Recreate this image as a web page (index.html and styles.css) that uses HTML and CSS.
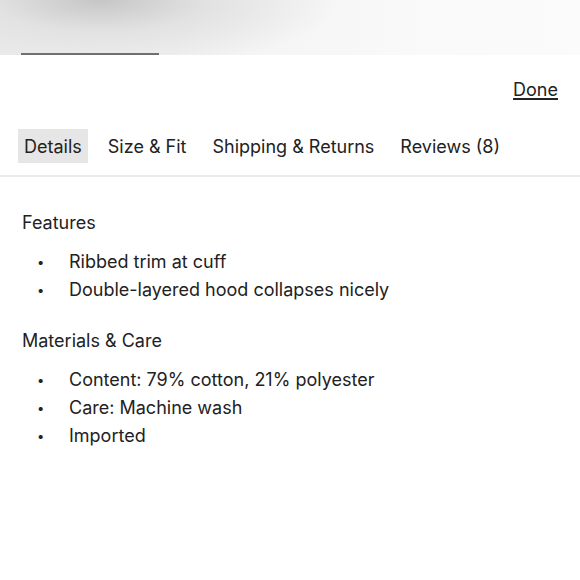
FILE: index.html
```html
<!DOCTYPE html>
<html lang="en">
<head>
  <meta charset="UTF-8" />
  <meta name="viewport" content="width=device-width, initial-scale=1.0" />
  <title>Product Details</title>
  <link rel="stylesheet" href="styles.css">
</head>
<body>
  <div class="backdrop">
    <div class="backdrop-line"></div>
  </div>

  <div class="sheet">
    <div class="sheet-head">
      <a href="#" class="done">Done</a>
    </div>

    <div class="tabs">
      <button class="tab active">Details</button>
      <button class="tab">Size &amp; Fit</button>
      <button class="tab">Shipping &amp; Returns</button>
      <button class="tab">Reviews (8)</button>
    </div>

    <div class="panel">
      <h3>Features</h3>
      <ul>
        <li>Ribbed trim at cuff</li>
        <li>Double-layered hood collapses nicely</li>
      </ul>

      <h3>Materials &amp; Care</h3>
      <ul>
        <li>Content: 79% cotton, 21% polyester</li>
        <li>Care: Machine wash</li>
        <li>Imported</li>
      </ul>
    </div>
  </div>
</body>
</html>
```

FILE: styles.css
```css
body {
  margin: 0;
  background: #fff;
  color: #222;
  font-family: 'Inter', 'Liberation Sans', sans-serif;
  font-size: 18px;
}

.backdrop {
  height: 55px;
  display: flex;
  flex-direction: column;
  justify-content: flex-end;
  background:
    radial-gradient(ellipse 240px 70px at 100px 0, #c6c6c6 0%, #e2e2e2 45%, rgba(248, 248, 248, 0) 100%),
    linear-gradient(90deg, #ececec, #f4f4f4 40%, #f9f9f9 70%, #fbfbfb);
}

.backdrop-line {
  width: 138px;
  height: 2px;
  margin-left: 21px;
  background: #6f6f6f;
}

.sheet-head {
  display: flex;
  justify-content: flex-end;
  padding: 23px 22px 0;
  line-height: 24px;
}

.done {
  color: #222;
  text-decoration: underline;
  text-underline-offset: 2px;
  text-decoration-thickness: 2px;
}

.tabs {
  display: flex;
  gap: 14px;
  margin-top: 27px;
  padding: 0 18px 12px;
  border-bottom: 2px solid #ebebeb;
}

.tab {
  font: inherit;
  color: #222;
  background: none;
  border: none;
  padding: 1px 6px 0;
  line-height: 33px;
  cursor: pointer;
}

.tab.active {
  background: #e6e6e6;
}

.panel {
  padding: 34px 22px 0;
}

h3 {
  margin: 0;
  font-size: 18px;
  font-weight: 400;
  line-height: 24px;
}

ul {
  list-style: none;
  margin: 13px 0 25px;
  padding: 0;
}

li {
  display: flex;
  line-height: 28px;
}

li::before {
  content: "•";
  width: 47px;
  padding-left: 15px;
  box-sizing: border-box;
  font-size: 13px;
}
```
